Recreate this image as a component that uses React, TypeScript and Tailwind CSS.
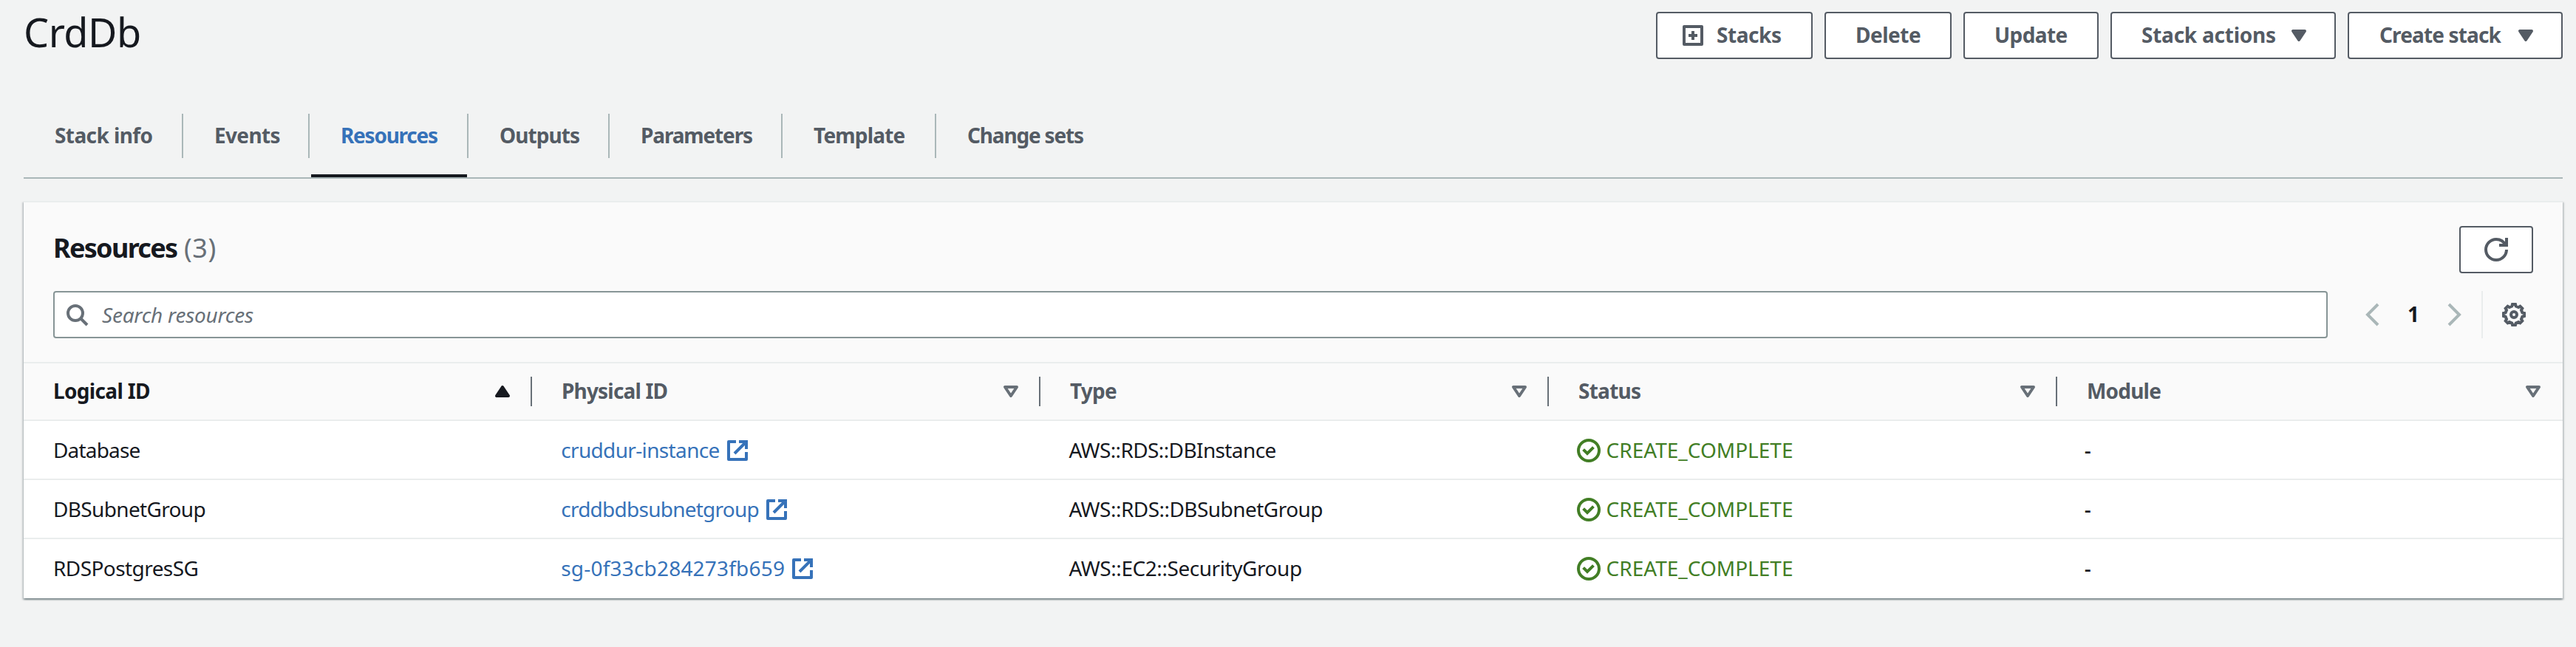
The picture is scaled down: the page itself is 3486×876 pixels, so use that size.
import type { ReactNode } from "react";

function Icon({ children, className = "" }: { children: ReactNode; className?: string }) {
  return (
    <svg
      viewBox="0 0 16 16"
      fill="none"
      stroke="currentColor"
      strokeWidth={2}
      className={`h-8 w-8 shrink-0 overflow-visible ${className}`}
    >
      {children}
    </svg>
  );
}

const CaretDownFilled = () => (
  <Icon>
    <path d="M4 5h8l-4 6-4-6z" fill="currentColor" strokeLinejoin="round" />
  </Icon>
);

const CaretDown = () => (
  <Icon className="text-[#687078]">
    <path d="M4 5h8l-4 6-4-6z" strokeLinejoin="round" />
  </Icon>
);

const CaretUpFilled = () => (
  <Icon className="text-[#16191f]">
    <path d="M4 11h8L8 5l-4 6z" fill="currentColor" strokeLinejoin="round" />
  </Icon>
);

const ExternalIcon = () => (
  <Icon>
    <path d="M10 2h4v4" strokeLinecap="square" />
    <path d="M6 10l8-8" />
    <path d="M14 9.048V14H2V2h5" strokeLinejoin="round" />
  </Icon>
);

const SuccessIcon = () => (
  <Icon>
    <circle cx="8" cy="8" r="7" />
    <path d="M5 8l2 2 3.521-3.521" strokeLinecap="square" />
  </Icon>
);

const gearPoints = Array.from({ length: 8 }, (_, k) => {
  const a = (k * Math.PI) / 4;
  const at = (along: number, side: number) =>
    `${(8 + along * Math.cos(a) - side * Math.sin(a)).toFixed(2)},${(8 + along * Math.sin(a) + side * Math.cos(a)).toFixed(2)}`;
  return [at(5.7, -1.35), at(7, -1), at(7, 1), at(5.7, 1.35)].join(" ");
}).join(" ");

const GearIcon = () => (
  <Icon className="text-[#545b64]">
    <circle cx="8" cy="8" r="2" />
    <polygon points={gearPoints} />
  </Icon>
);

function Button({ children, className }: { children: ReactNode; className: string }) {
  return (
    <button
      className={`flex h-16 shrink-0 items-center rounded-[4px] border-2 border-[#545b64] bg-white font-bold text-[#545b64] ${className}`}
    >
      {children}
    </button>
  );
}

const tabs = [
  { label: "Stack info", box: "w-[216px]", text: "tracking-[-0.59px]" },
  { label: "Events", box: "w-[171px]", text: "tracking-[-0.65px]" },
  { label: "Resources", box: "w-[215px]", text: "tracking-[-1.25px]", active: true },
  { label: "Outputs", box: "w-[191px]", text: "tracking-[-0.92px]" },
  { label: "Parameters", box: "w-[234px]", text: "tracking-[-1.14px]" },
  { label: "Template", box: "w-[208px]", text: "tracking-[-0.81px]" },
  { label: "Change sets", box: "w-[240px]", text: "tracking-[-1.18px]", last: true },
];

const columns = [
  { label: "Logical ID", text: "tracking-[-0.66px]", sorted: true },
  { label: "Physical ID", text: "tracking-[-0.82px]" },
  { label: "Type", text: "tracking-[-0.76px]" },
  { label: "Status", text: "tracking-[-0.74px]" },
  { label: "Module", text: "tracking-[-0.8px]", last: true },
];

const rows = [
  {
    logical: "Database",
    logicalText: "tracking-[-0.83px]",
    physical: "cruddur-instance",
    physicalText: "tracking-[-0.65px]",
    type: "AWS::RDS::DBInstance",
    typeText: "tracking-[-0.62px]",
  },
  {
    logical: "DBSubnetGroup",
    logicalText: "tracking-[-0.66px]",
    physical: "crddbdbsubnetgroup",
    physicalText: "tracking-[-0.75px]",
    type: "AWS::RDS::DBSubnetGroup",
    typeText: "tracking-[-0.54px]",
  },
  {
    logical: "RDSPostgresSG",
    logicalText: "tracking-[-0.58px]",
    physical: "sg-0f33cb284273fb659",
    physicalText: "tracking-[0.2px]",
    type: "AWS::EC2::SecurityGroup",
    typeText: "tracking-[-0.44px]",
  },
];

export default function App() {
  return (
    <div className="h-[876px] w-full overflow-hidden whitespace-nowrap bg-[#f2f3f3] pr-[18px] pl-8 font-['Noto_Sans',sans-serif] text-[28px] leading-10 text-[#16191f]">
      <header className="flex h-[154px] items-start justify-between">
        <h1 className="pt-[13px] text-[54px] leading-[60px] tracking-[-0.5px]">CrdDb</h1>
        <div className="flex gap-4 pt-4">
          <Button className="w-[212px] gap-4 pl-8">
            <Icon>
              <rect x="2" y="2" width="12" height="12" strokeLinejoin="round" />
              <path d="M8 5v6M5 8h6" />
            </Icon>
            <span className="pb-0.5 tracking-[-0.43px]">Stacks</span>
          </Button>
          <Button className="w-[172px] pl-10">
            <span className="pb-0.5 tracking-[-0.48px]">Delete</span>
          </Button>
          <Button className="w-[183px] pl-10">
            <span className="pb-0.5 tracking-[-0.6px]">Update</span>
          </Button>
          <Button className="w-[305px] justify-between pr-8 pl-10">
            <span className="pb-0.5 tracking-[-0.24px]">Stack actions</span>
            <CaretDownFilled />
          </Button>
          <Button className="w-[291px] justify-between pr-8 pl-[41px]">
            <span className="pb-0.5 tracking-[-0.86px]">Create stack</span>
            <CaretDownFilled />
          </Button>
        </div>
      </header>

      <nav className="flex h-[88px] border-b-2 border-[#aab7b8]">
        {tabs.map((tab) => (
          <div key={tab.label} className={`flex flex-col justify-between ${tab.box}`}>
            <div
              className={`flex h-[60px] items-center pl-[42px] font-bold ${tab.last ? "" : "border-r-2 border-[#aab7b8]"} ${tab.active ? "text-[#3672b9]" : "text-[#545b64]"}`}
            >
              <span className={`pb-0.5 ${tab.text}`}>{tab.label}</span>
            </div>
            {tab.active && <div className="mx-0.5 h-1 bg-[#16191f]" />}
          </div>
        ))}
      </nav>

      <section className="mt-[30px] h-[538px] border-t-2 border-[#eaeded] bg-white shadow-[0_2px_2px_0_rgba(0,28,36,0.3),2px_2px_2px_0_rgba(0,28,36,0.15),-2px_2px_2px_0_rgba(0,28,36,0.15)]">
        <div className="h-[218px] border-b-2 border-[#eaeded] bg-[#fafafa] px-10 pt-8">
          <div className="flex h-16 items-center justify-between">
            <h2 className="flex pb-1 text-[36px] leading-[50px]">
              <span className="w-[177px] font-bold tracking-[-1.69px]">Resources</span>
              <span className="tracking-[0.55px] text-[#687078]">(3)</span>
            </h2>
            <Button className="w-[100px] justify-center">
              <Icon>
                <path d="M10 5h5V0" />
                <path d="M15 8c0 3.87-3.13 7-7 7s-7-3.13-7-7 3.13-7 7-7c2.79 0 5.2 1.63 6.33 4" />
              </Icon>
            </Button>
          </div>
          <div className="mt-6 flex h-16 items-center">
            <div className="flex h-16 flex-1 items-center gap-[18px] rounded-[4px] border-2 border-[#879596] bg-white pl-3.5 text-[#687078]">
              <Icon>
                <circle cx="7" cy="7" r="5" />
                <path d="M15 15l-4.5-4.5" />
              </Icon>
              <span className="italic tracking-[-0.24px]">Search resources</span>
            </div>
            <div className="ml-11 flex items-center">
              <Icon className="text-[#aab7b8]">
                <path d="M12 1L5 8l7 7" />
              </Icon>
              <span className="w-20 pb-0.5 text-center font-bold">1</span>
              <Icon className="text-[#aab7b8]">
                <path d="M4 1l7 7-7 7" />
              </Icon>
            </div>
            <div className="mr-[26px] ml-5 h-16 w-0.5 bg-[#eaeded]" />
            <div className="mr-2.5">
              <GearIcon />
            </div>
          </div>
        </div>

        <div className="flex h-[78px] border-b-2 border-[#eaeded] bg-[#fafafa] font-bold text-[#545b64]">
          {columns.map((col) => (
            <div
              key={col.label}
              className={`flex items-center pl-10 ${col.last ? "flex-1 pr-6" : "w-[688px]"} ${col.sorted ? "text-[#16191f]" : ""}`}
            >
              <span className={`flex-1 pb-0.5 ${col.text}`}>{col.label}</span>
              {col.sorted ? <CaretUpFilled /> : <CaretDown />}
              {!col.last && <div className="ml-[22px] h-10 w-0.5 bg-[#687078]" />}
            </div>
          ))}
        </div>

        {rows.map((row) => (
          <div
            key={row.logical}
            className="grid h-20 grid-cols-5 items-center border-b-2 border-[#eaeded] pt-0.5 last:border-white"
          >
            <div className={`pb-0.5 pl-10 ${row.logicalText}`}>{row.logical}</div>
            <div className="flex items-center gap-2 pl-10 text-[#3672b9]">
              <span className={`pb-0.5 ${row.physicalText}`}>{row.physical}</span>
              <ExternalIcon />
            </div>
            <div className={`pb-0.5 pl-10 ${row.typeText}`}>{row.type}</div>
            <div className="flex items-center gap-2 pl-10 text-[#427e25]">
              <SuccessIcon />
              <span className="pb-0.5">CREATE_COMPLETE</span>
            </div>
            <div className="pb-0.5 pl-10 font-medium">-</div>
          </div>
        ))}
      </section>
    </div>
  );
}
